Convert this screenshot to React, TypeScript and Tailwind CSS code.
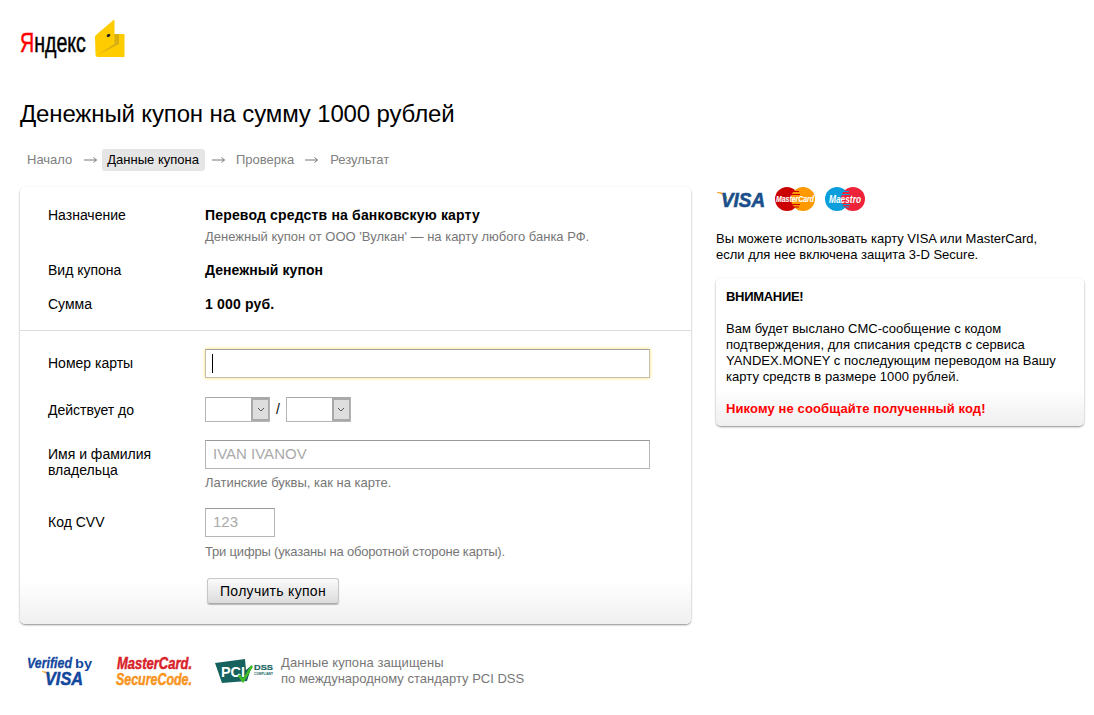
import React from "react";

function YandexLogo() {
  return (
    <div className="flex items-start h-[38px]">
      <span className="mt-[7px] block w-[65px] origin-left scale-x-[0.7] whitespace-nowrap text-[28px] leading-[32px] text-black [-webkit-text-stroke:0.5px_black]">
        <span className="text-[#f00] [-webkit-text-stroke:0.5px_#f00]">Я</span>ндекс
      </span>
      <svg width="31" height="39" viewBox="0 0 31 39" className="ml-[9px] mt-[-1px]">
        <path d="M1 18 Q1 17 2 16 L19.500 1 Q20.500 0.500 20.500 1.500 V15 H30.500 V38 H4 Q1.500 38 1.500 35 Z" fill="#fc0" />
        <path d="M20.500 15 H25 V25 L3.500 36 L20.500 25 Z" fill="#d9ae12" />
        <ellipse cx="14.500" cy="16.500" rx="1.900" ry="1.500" fill="#222" transform="rotate(-30 14.500 16.500)" />
      </svg>
    </div>
  );
}

function Arrow() {
  return (
    <svg width="13" height="8" viewBox="0 0 13 8" className="shrink-0">
      <path d="M0 4H12.500M9.500 1.500L12.500 4L9.500 6.500" fill="none" stroke="#777" strokeWidth="1" />
    </svg>
  );
}

function VisaLogo() {
  return (
    <svg width="50" height="22" viewBox="0 0 50 22" className="overflow-visible">
      <path d="M1 4 Q9 3 12 12 Q8 6 1 4.800Z" fill="#f7a823" />
      <text x="5" y="19" fontSize="20" fontWeight="700" fontStyle="italic" fill="#1a4f8b" stroke="#1a4f8b" strokeWidth="0.600" fontFamily="Liberation Sans" textLength="44" lengthAdjust="spacingAndGlyphs">VISA</text>
    </svg>
  );
}

function MastercardLogo() {
  return (
    <svg width="40" height="24" viewBox="0 0 40 24" className="overflow-visible">
      <circle cx="12" cy="12" r="12" fill="#cc0000" />
      <circle cx="28" cy="12" r="12" fill="#ff9900" />
      <path d="M16 4.500H24M15 7.500H25M15 17.500H25M16 20H24" stroke="#cc0000" strokeWidth="1.200" />
      <text x="20" y="15" textAnchor="middle" fontSize="9.500" fontWeight="700" fontStyle="italic" fill="#fff" stroke="#fff" strokeWidth="0.150" fontFamily="Liberation Sans" textLength="38" lengthAdjust="spacingAndGlyphs">MasterCard</text>
    </svg>
  );
}

function MaestroLogo() {
  return (
    <svg width="40" height="24" viewBox="0 0 40 24" className="overflow-visible">
      <circle cx="12" cy="12" r="12" fill="#0a9fdc" />
      <circle cx="28" cy="12" r="12" fill="#ee2239" />
      <path d="M16 4.500H24M15 7.500H25M15 17.500H25M16 20H24" stroke="#0a9fdc" strokeWidth="1.200" />
      <text x="20" y="15.500" textAnchor="middle" fontSize="10" fontWeight="700" fontStyle="italic" fill="#fff" fontFamily="Liberation Sans" textLength="32" lengthAdjust="spacingAndGlyphs">Maestro</text>
    </svg>
  );
}

function VerifiedVisa() {
  return (
    <svg width="66" height="30" viewBox="0 0 66 30" className="overflow-visible">
      <text x="0" y="12" fontSize="15" fontWeight="700" fontStyle="italic" fill="#12479d" stroke="#12479d" strokeWidth="0.300" fontFamily="Liberation Sans" textLength="45" lengthAdjust="spacingAndGlyphs">Verified</text>
      <text x="48" y="12" fontSize="12" fontWeight="700" fill="#12479d" fontFamily="Liberation Sans" textLength="17" lengthAdjust="spacingAndGlyphs">by</text>
      <path d="M15 15 Q22 15 24 21 Q20 17 15 15.800Z" fill="#f7a823" />
      <text x="18" y="29" fontSize="18" fontWeight="700" fontStyle="italic" fill="#12479d" stroke="#12479d" strokeWidth="0.500" fontFamily="Liberation Sans" textLength="38" lengthAdjust="spacingAndGlyphs">VISA</text>
    </svg>
  );
}

function SecureCode() {
  return (
    <svg width="80" height="30" viewBox="0 0 80 30" className="overflow-visible">
      <text x="1" y="13" fontSize="17" fontWeight="700" fontStyle="italic" fill="#d9222a" stroke="#d9222a" strokeWidth="0.500" fontFamily="Liberation Sans" textLength="75" lengthAdjust="spacingAndGlyphs">MasterCard.</text>
      <text x="0" y="29" fontSize="17" fontWeight="700" fontStyle="italic" fill="#f7941d" stroke="#f7941d" strokeWidth="0.500" fontFamily="Liberation Sans" textLength="76" lengthAdjust="spacingAndGlyphs">SecureCode.</text>
    </svg>
  );
}

function PciLogo() {
  return (
    <svg width="58" height="26" viewBox="0 0 58 26" className="overflow-visible">
      <path d="M0 5 L30 1 L31 12 L37 7 L32 23 L7 25 Z" fill="#16625e" />
      <text x="6" y="19" fontSize="15" fontWeight="700" fill="#fff" fontFamily="Liberation Sans" textLength="24" lengthAdjust="spacingAndGlyphs">PCI</text>
      <path d="M24 17 L28 23 L37 8" fill="none" stroke="#3fbf26" strokeWidth="2.500" />
      <text x="39" y="12" fontSize="8" fontWeight="700" fill="#16625e" stroke="#16625e" strokeWidth="0.200" fontFamily="Liberation Sans" textLength="19" lengthAdjust="spacingAndGlyphs">DSS</text>
      <text x="39" y="17" fontSize="3.500" fontWeight="700" fill="#16625e" fontFamily="Liberation Sans" textLength="19" lengthAdjust="spacingAndGlyphs">COMPLIANT</text>
    </svg>
  );
}

function SelectBox() {
  return (
    <div className="flex h-[25px] w-[65px] border border-[#b5b5b5] border-t-[#a8a8a8] bg-white">
      <div className="flex-1" />
      <div className="flex w-[18px] items-center justify-center border-2 border-r-[1px] border-[#a9a9a9] bg-[#dedede]">
        <svg width="8" height="5" viewBox="0 0 8 5">
          <path d="M1 1L4 4L7 1" fill="none" stroke="#555" strokeWidth="1" />
        </svg>
      </div>
    </div>
  );
}

export default function App() {
  return (
    <div className="min-h-[715px] bg-white pl-5 pr-[10px] pt-[20px] font-['Liberation_Sans',Arial,sans-serif] text-[14px] text-black">
      <YandexLogo />

      <h1 className="mt-[41px] text-[24px] leading-[30px] tracking-[-0.14px]">Денежный купон на сумму 1000 рублей</h1>

      <div className="mt-[20px] flex h-[22px] items-center text-[13px] text-[#808080]">
        <span className="ml-[7px]">Начало</span>
        <span className="ml-[12px]"><Arrow /></span>
        <span className="ml-[5px] flex h-[22px] items-center rounded-[3px] bg-[#e5e5e5] pl-[5px] pr-[6px] text-black">Данные купона</span>
        <span className="ml-[7px]"><Arrow /></span>
        <span className="ml-[11px]">Проверка</span>
        <span className="ml-[11px]"><Arrow /></span>
        <span className="ml-[12px]">Результат</span>
      </div>

      <div className="mt-[16px] flex items-start gap-[25px]">
        <div>
          <div className="h-[437px] w-[671px] rounded-[5px] bg-gradient-to-b from-white from-[90%] to-[#f0f0f0] shadow-[0_1px_2px_rgba(0,0,0,0.45)]">
            <div className="flex px-7 pt-[20px]">
              <div className="w-[157px] leading-[16px]">Назначение</div>
              <div>
                <div className="font-bold leading-[16px] tracking-[0.17px]">Перевод средств на банковскую карту</div>
                <div className="mt-[6px] text-[13px] leading-[16px] text-[#777]">Денежный купон от ООО 'Вулкан' — на карту любого банка РФ.</div>
              </div>
            </div>
            <div className="mt-[17px] flex px-7">
              <div className="w-[157px] leading-[16px]">Вид купона</div>
              <div className="font-bold leading-[16px] tracking-[0.07px]">Денежный купон</div>
            </div>
            <div className="mt-[18px] flex px-7">
              <div className="w-[157px] leading-[16px]">Сумма</div>
              <div className="font-bold leading-[16px] tracking-[0.17px]">1 000 руб.</div>
            </div>

            <div className="mt-[18px] border-t border-[#dcdcdc]" />

            <div className="mt-[18px] flex px-7">
              <div className="w-[157px] pt-[6px] leading-[16px]">Номер карты</div>
              <div className="flex h-[29px] w-[445px] items-center border border-[#c4c0ae] border-t-[#a0a0a0] pl-[6px] shadow-[0_0_3px_rgba(255,204,0,0.7)]">
                <div className="h-[19px] w-px bg-black" />
              </div>
            </div>

            <div className="mt-[19px] flex items-center px-7">
              <div className="w-[157px] leading-[16px]">Действует до</div>
              <SelectBox />
              <span className="mx-[6px]">/</span>
              <SelectBox />
            </div>

            <div className="mt-[18px] flex px-7">
              <div className="w-[157px] pt-[6px] leading-[16px]">Имя и фамилия<br />владельца</div>
              <div>
                <div className="flex h-[29px] w-[445px] items-center border border-[#b5b5b5] border-t-[#999] pl-[7px] text-[15px] text-[#aaa]">IVAN IVANOV</div>
                <div className="mt-[6px] text-[13px] leading-[16px] text-[#777]">Латинские буквы, как на карте.</div>
              </div>
            </div>

            <div className="mt-[17px] flex px-7">
              <div className="w-[157px] pt-[6px] leading-[16px]">Код CVV</div>
              <div>
                <div className="flex h-[29px] w-[70px] items-center border border-[#b5b5b5] border-t-[#999] pl-[7px] text-[15px] text-[#aaa]">123</div>
                <div className="mt-[7px] text-[13px] leading-[16px] tracking-[-0.19px] text-[#777]">Три цифры (указаны на оборотной стороне карты).</div>
              </div>
            </div>

            <div className="mt-[18px] pl-[187px]">
              <button className="h-[26px] w-[132px] rounded-[3px] border border-[#c8c8c8] border-b-[#aaa] bg-gradient-to-b from-[#fafafa] to-[#dcdcdc] text-[14px] tracking-[0.3px] shadow-[0_1px_1px_rgba(0,0,0,0.25)]">Получить купон</button>
            </div>
          </div>

          <div className="mt-[31px] flex items-center">
            <span className="ml-[7px]"><VerifiedVisa /></span>
            <span className="ml-[23px]"><SecureCode /></span>
            <span className="ml-[19px]"><PciLogo /></span>
            <div className="ml-[8px] whitespace-nowrap text-[13px] leading-[16px] text-[#777]"><span className="tracking-[0.09px]">Данные купона защищены</span><br />по международному стандарту PCI DSS</div>
          </div>
        </div>

        <div className="w-[368px]">
          <div className="flex items-center">
            <VisaLogo />
            <span className="ml-[9px]"><MastercardLogo /></span>
            <span className="ml-[10px]"><MaestroLogo /></span>
          </div>
          <div className="mt-[20px] text-[13px] leading-[16px]">Вы можете использовать карту VISA или MasterCard,<br />если для нее включена защита 3-D Secure.</div>
          <div className="mt-[15px] rounded-[5px] bg-gradient-to-b from-white from-[75%] to-[#efefef] px-[10px] pb-[9px] pt-[11px] text-[13px] leading-[16px] shadow-[0_1px_2px_rgba(0,0,0,0.45)]">
            <div className="font-bold tracking-[-0.3px]">ВНИМАНИЕ!</div>
            <div className="mt-[16px] tracking-[0.05px]">Вам будет выслано СМС-сообщение с кодом<br />подтверждения, для списания средств с сервиса<br />YANDEX.MONEY с последующим переводом на Вашу<br />карту средств в размере 1000 рублей.</div>
            <div className="mt-[16px] font-bold tracking-[0.11px] text-[#f00]">Никому не сообщайте полученный код!</div>
          </div>
        </div>
      </div>
    </div>
  );
}
